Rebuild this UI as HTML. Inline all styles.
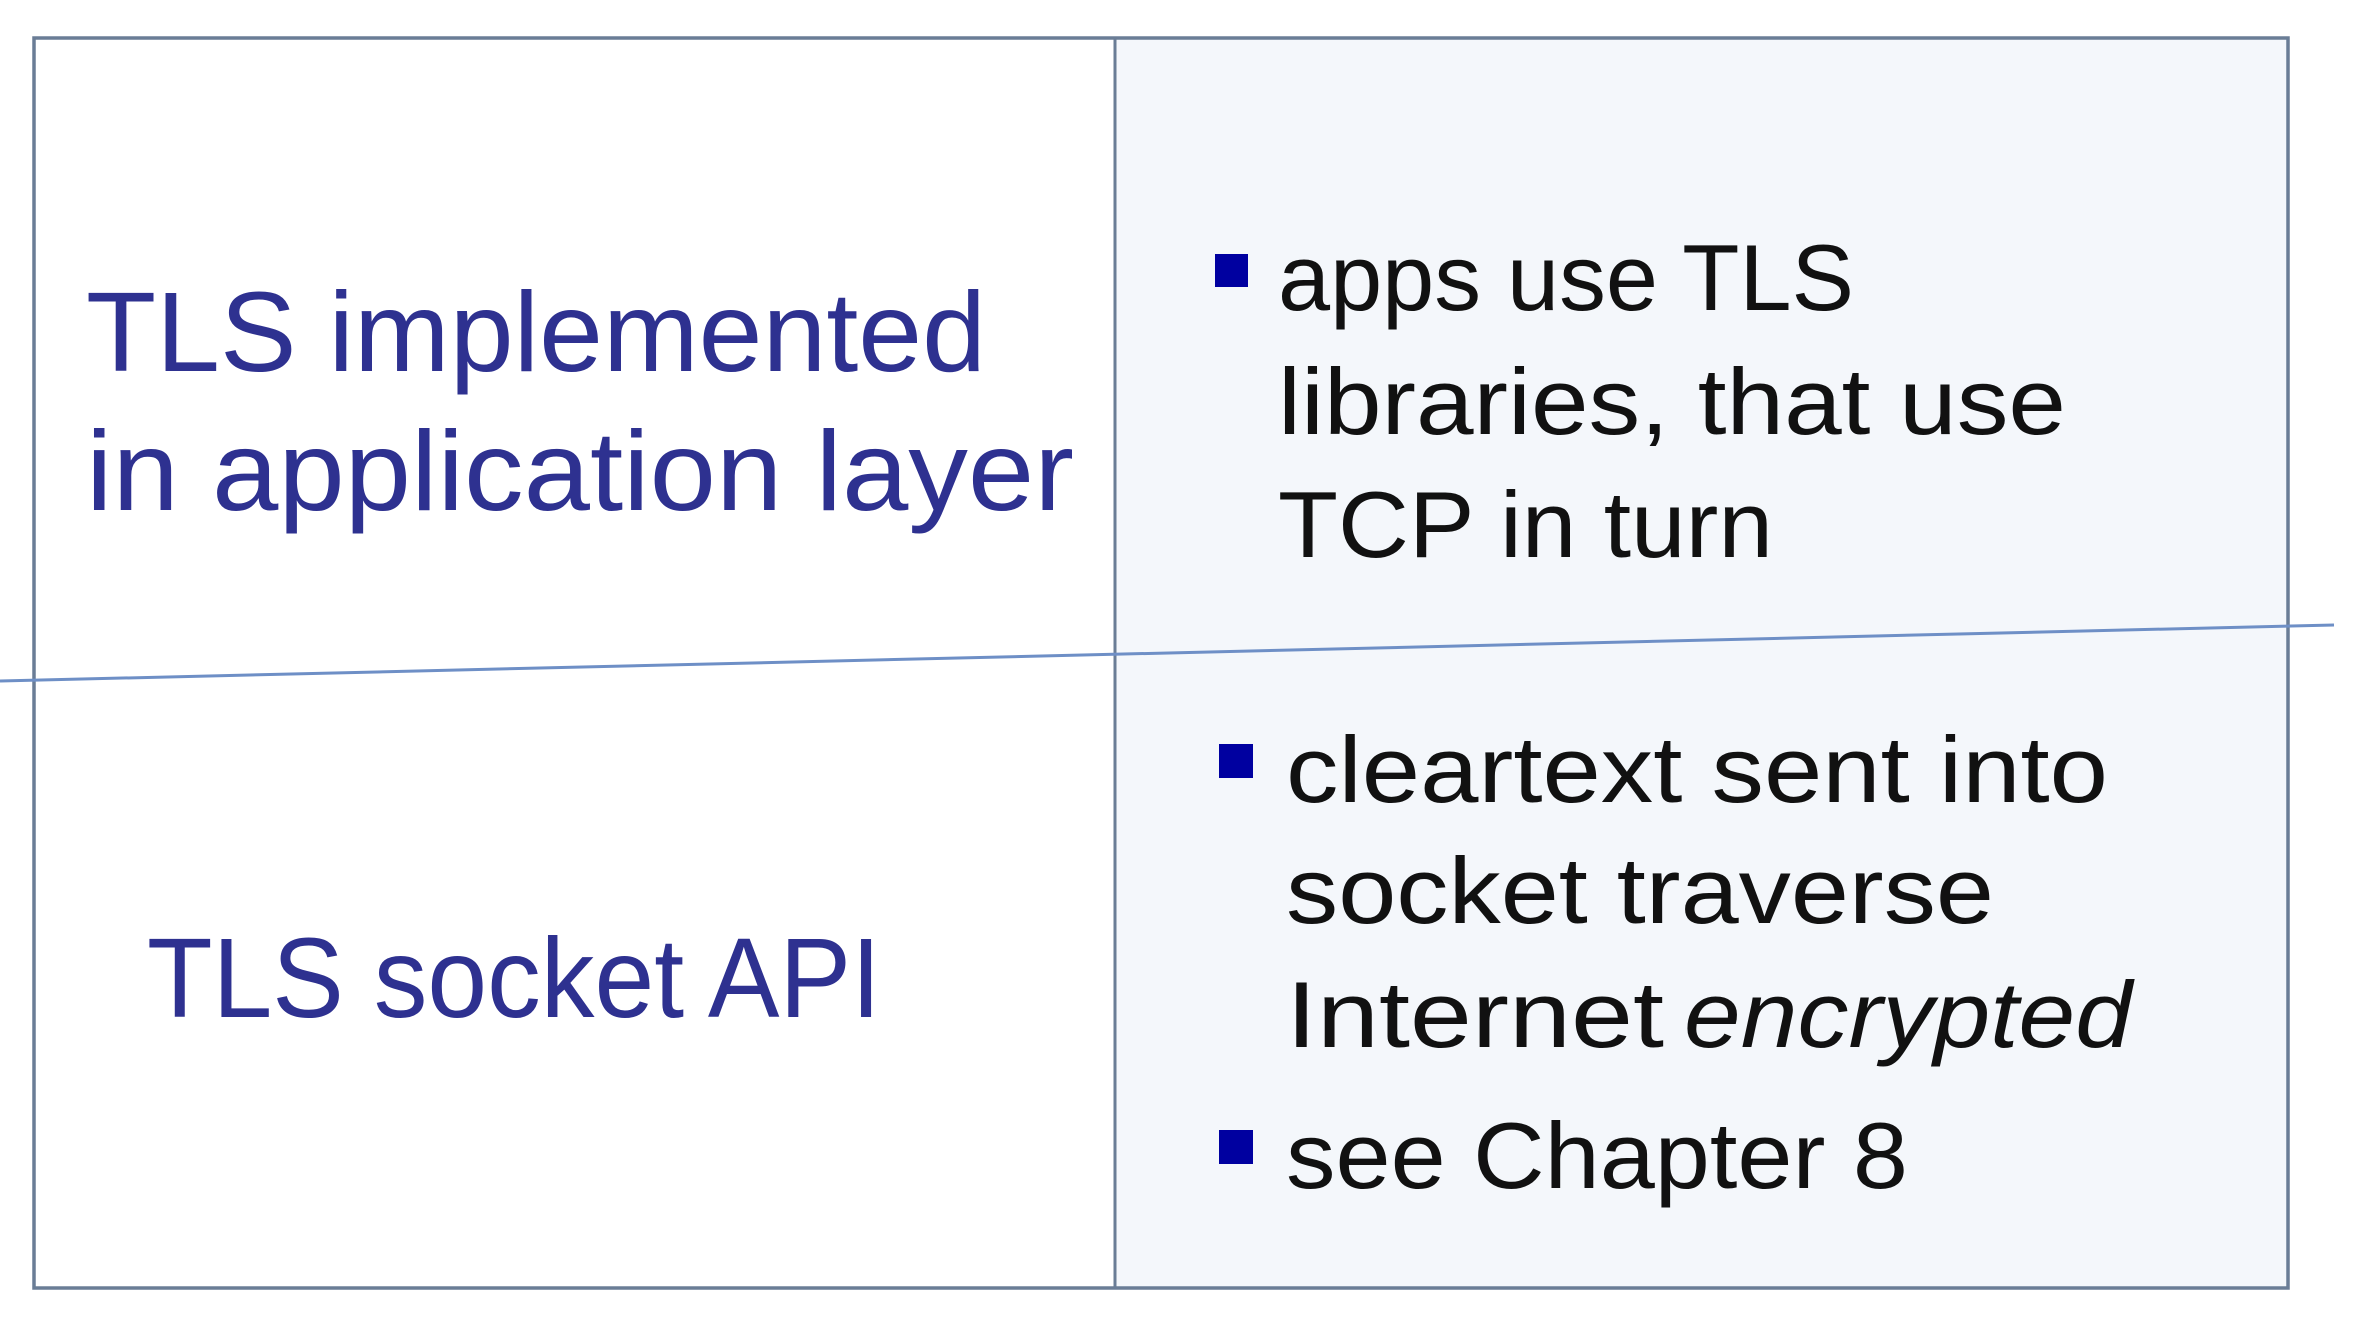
<!DOCTYPE html>
<html><head><meta charset="utf-8"><style>
html,body{margin:0;padding:0;background:#fff;width:2374px;height:1320px;overflow:hidden}
svg{display:block}
</style></head><body>
<svg width="2374" height="1320" viewBox="0 0 2374 1320" xmlns="http://www.w3.org/2000/svg">
<rect x="0" y="0" width="2374" height="1320" fill="#fff"/>
<rect x="1115" y="38" width="1173" height="1250" fill="#f4f7fb"/>
<rect x="34" y="38" width="2254" height="1250" fill="none" stroke="#6a7d96" stroke-width="3.5"/>
<line x1="1115" y1="38" x2="1115" y2="1288" stroke="#6a7d96" stroke-width="3"/>
<line x1="0" y1="681" x2="2334" y2="625" stroke="#6e8fc6" stroke-width="3"/>
<g font-family="'Liberation Sans', sans-serif" fill="#2e3190" font-size="113">
<text x="86" y="371" textLength="900" lengthAdjust="spacingAndGlyphs">TLS implemented</text>
<text x="86" y="510" textLength="988" lengthAdjust="spacingAndGlyphs">in application layer</text>
<text x="147" y="1017" textLength="734" lengthAdjust="spacingAndGlyphs">TLS socket API</text>
</g>
<g fill="#0000a0">
<rect x="1215" y="254" width="33" height="33"/>
<rect x="1219" y="744" width="34" height="34"/>
<rect x="1219" y="1130" width="34" height="34"/>
</g>
<g font-family="'Liberation Sans', sans-serif" fill="#111" font-size="94">
<text x="1278" y="310" textLength="576" lengthAdjust="spacingAndGlyphs">apps use TLS</text>
<text x="1278" y="434" textLength="788" lengthAdjust="spacingAndGlyphs">libraries, that use</text>
<text x="1278" y="557" textLength="495" lengthAdjust="spacingAndGlyphs">TCP in turn</text>
<text x="1286" y="802" textLength="822" lengthAdjust="spacingAndGlyphs">cleartext sent into</text>
<text x="1286" y="923" textLength="708" lengthAdjust="spacingAndGlyphs">socket  traverse</text>
<text x="1286" y="1047" textLength="378" lengthAdjust="spacingAndGlyphs">Internet</text>
<text x="1684" y="1047" textLength="448" lengthAdjust="spacingAndGlyphs" font-style="italic">encrypted</text>
<text x="1286" y="1188" textLength="622" lengthAdjust="spacingAndGlyphs">see Chapter 8</text>
</g>
</svg>
</body></html>
